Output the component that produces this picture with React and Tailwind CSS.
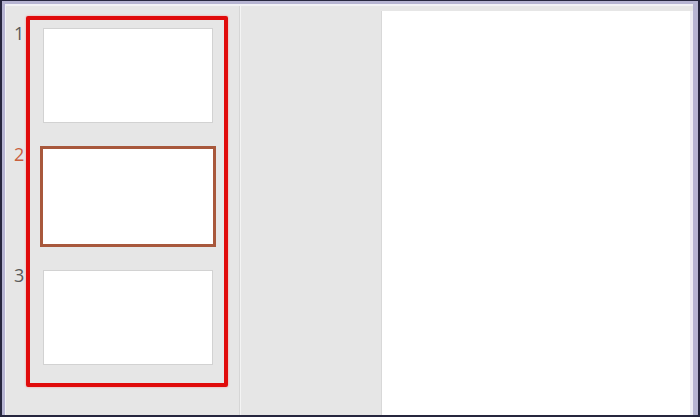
import React from 'react';

const slides = [1, 2, 3];

export default function App() {
    const selected = 2;

    return (
        <div className="w-[700px] h-[417px] bg-[#26263e] pl-[2px] pr-[2px] pt-px pb-[2px] overflow-hidden" style={{ fontFamily: '"Open Sans", "Noto Sans", sans-serif' }}>
            <div className="h-full bg-[#b6b4d2] pl-[3px] pr-[5px] pt-[3px] flex">
                <div className="flex-1 bg-[#f2f2f6] pl-px pt-[2px] flex">
                    {/* slide thumbnails pane */}
                    <div className="relative w-[233px] bg-[#e6e6e6] flex flex-col pt-[19px] gap-[20px]">
                        {slides.map(n => (
                            <div key={n} className="flex">
                                <div className={`w-[34px] pl-[8px] -mt-[3px] text-[18px] leading-[22px] ${n === selected ? 'text-[#c8603e]' : 'text-[#5a5a5a]'}`}>
                                    {n}
                                </div>
                                <div className={`w-[176px] h-[101px] border-[3px] ${n === selected ? 'border-[#a8583c]' : 'border-transparent'}`}>
                                    <div className={`h-full bg-white ${n === selected ? '' : 'border border-[#d2d2d2]'}`}></div>
                                </div>
                            </div>
                        ))}
                        {/* highlight annotation */}
                        <div className="absolute left-[20px] top-[10px] w-[202px] h-[371px] border-[4px] border-[#e00b0b] rounded-[2px] shadow-[0_0_2px_rgba(255,80,80,0.6)]"></div>
                    </div>
                    {/* divider */}
                    <div className="w-px bg-[#d6d6d6]"></div>
                    <div className="w-px bg-[#f4f4f4]"></div>
                    {/* gray gutter */}
                    <div className="w-[140px] bg-[#e6e6e6]"></div>
                    {/* slide editing area */}
                    <div className="flex-1 bg-[#e6e6e6] pt-[5px] flex">
                        <div className="flex-1 bg-white border-l border-[#d8d8d8]"></div>
                        <div className="w-[3px] bg-[#eeeef4]"></div>
                    </div>
                </div>
            </div>
        </div>
    );
}
